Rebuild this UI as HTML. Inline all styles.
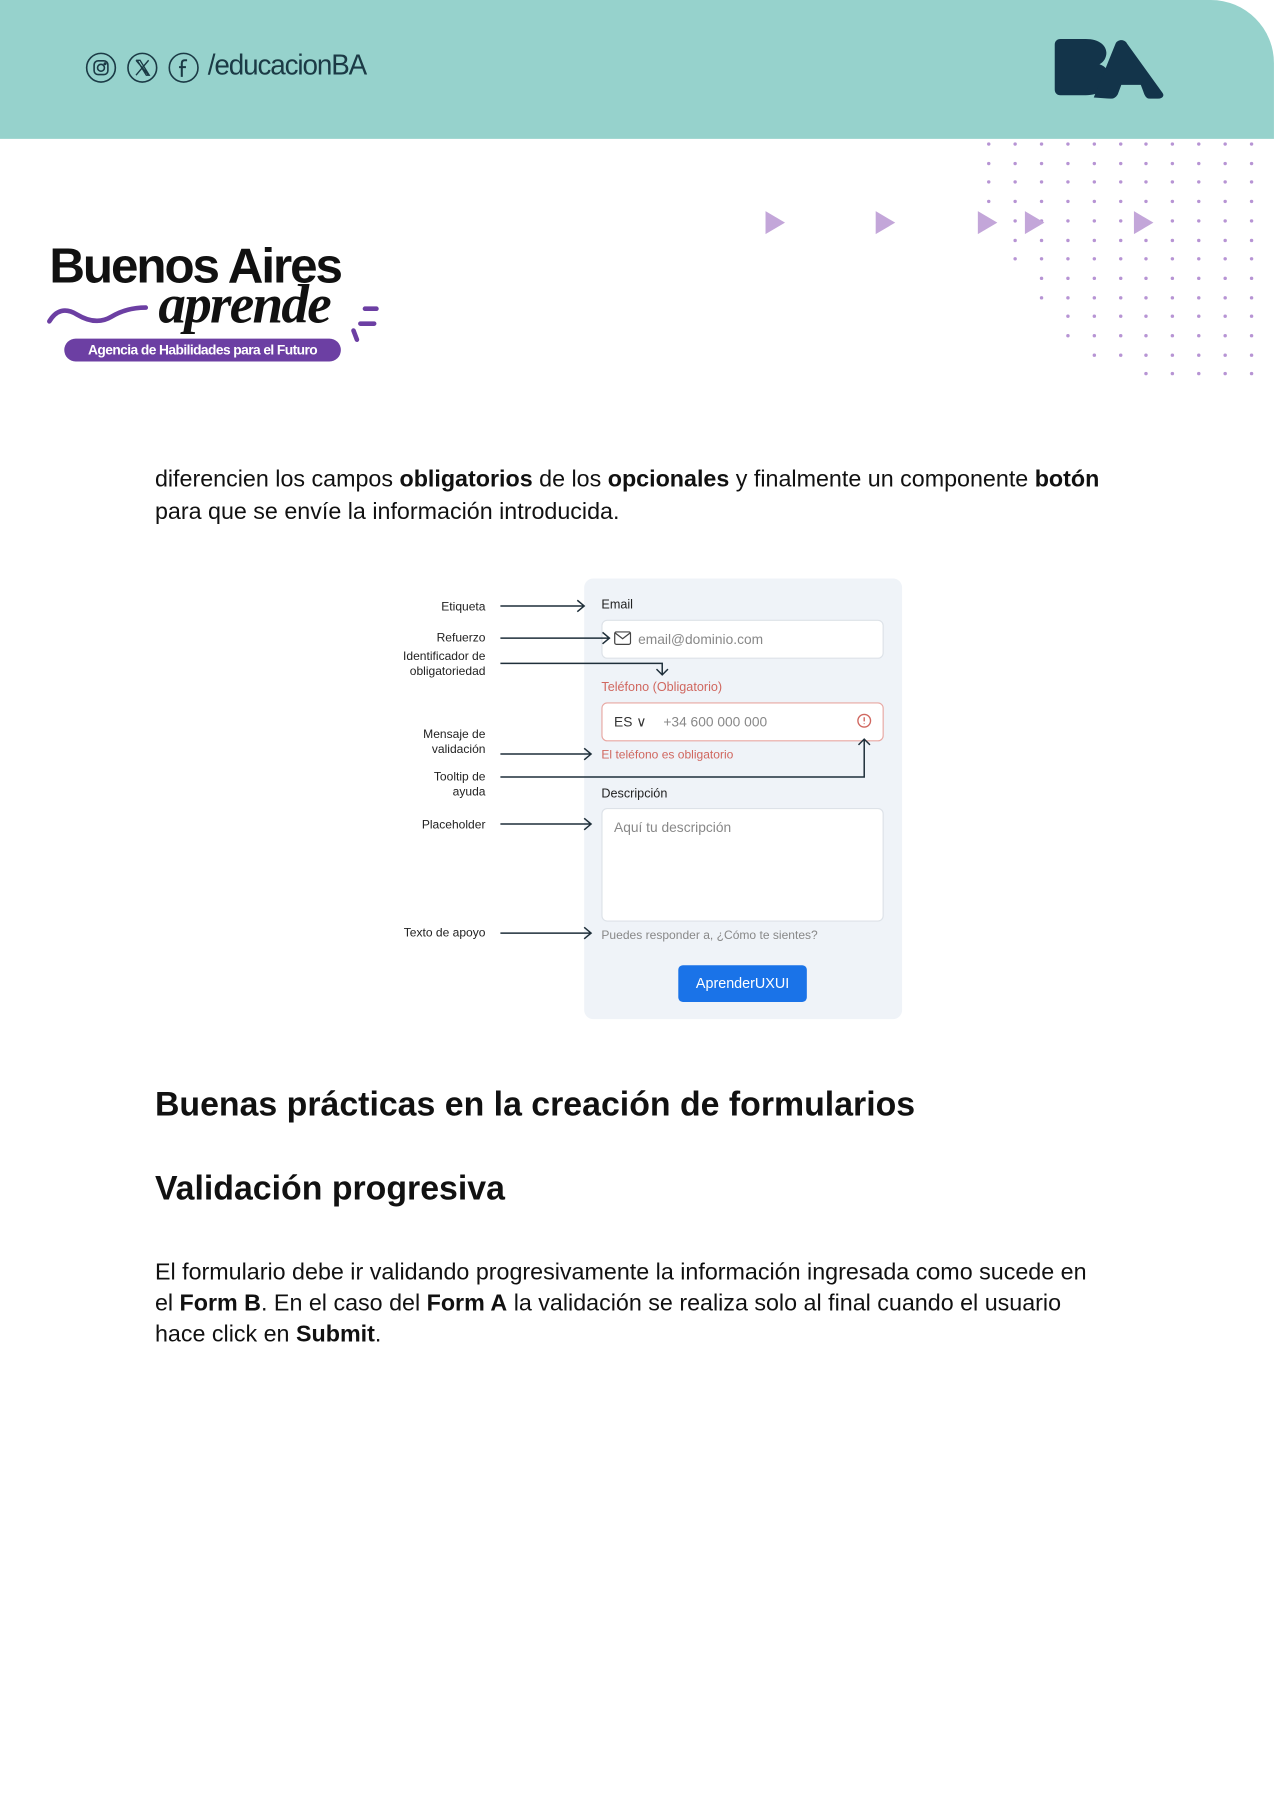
<!DOCTYPE html>
<html><head><meta charset="utf-8"><style>
html,body{margin:0;padding:0;background:#fff;}
body{width:1274px;height:1800px;overflow:hidden;position:relative;}
#s{position:absolute;left:0;top:0;width:1110px;height:1568px;transform:scale(1.1477);transform-origin:0 0;font-family:"Liberation Sans",sans-serif;color:#111;}
.a{position:absolute;white-space:nowrap;}
.hdr{position:absolute;left:0;top:0;width:1110px;height:121px;background:#96d2cc;border-top-right-radius:55px;}
.dot{position:absolute;width:3px;height:3px;border-radius:50%;background:#b794d4;}
.tri{position:absolute;width:0;height:0;border-top:10px solid transparent;border-bottom:10px solid transparent;border-left:17px solid #c3a6d9;}
.p{font-size:20.3px;line-height:27.5px;}
.lab{position:absolute;font-size:10.5px;color:#222;text-align:right;width:120px;left:303px;line-height:13px;}
.fl{position:absolute;font-size:11px;}
.inp{position:absolute;left:524px;width:244px;background:#fff;border:1px solid #dde2e8;border-radius:5px;}
</style></head><body><div id="s">
<div class="hdr"></div>
<svg class="a" style="left:74px;top:45px" width="102" height="28" viewBox="0 0 102 28" fill="none" stroke="#1b3a45" stroke-width="1.4">
<circle cx="14" cy="14" r="12.5"/><rect x="8" y="8" width="12" height="12" rx="3.5"/><circle cx="14" cy="14" r="3"/><circle cx="17.5" cy="10.5" r=".6" fill="#1b3a45"/>
<circle cx="50" cy="14" r="12.5"/><path d="M44.5 7.5l11 13M55.5 7.5l-11 13M45.5 7.5h2.5l8 13h-2.5z" stroke-width="1.2"/>
<circle cx="86" cy="14" r="12.5"/><path d="M89 7.5h-2c-1.8 0-2.6 1-2.6 2.8V22M82 13.5h6" stroke-width="1.8"/>
</svg>
<div class="a" style="left:181px;top:43px;font-size:25px;color:#1b3a45;letter-spacing:-1px;transform:scaleX(.97);transform-origin:0 0">/educacionBA</div>
<svg class="a" style="left:917px;top:33px" width="98" height="53" viewBox="0 0 98 53"><path d="M2 6c0-3 2-5 5-5h22c12 0 18 6 18 12 0 4-2 8-6 10 6 2 8 6 8 11 0 10-8 16-20 16H7c-3 0-5-2-5-5z" fill="#13344a"/><path d="M36 52L55 5c2-4 8-4 10 0l31 43c2 3-1 5-4 5h-7c-3 0-4-2-5-4l-3-8H60l-3 8c-1 2-3 4-6 4z" fill="#13344a"/></svg>
<div id="dots"></div>
<div class="tri" style="left:667px;top:184px"></div>
<div class="tri" style="left:763px;top:184px"></div>
<div class="tri" style="left:852px;top:184px"></div>
<div class="tri" style="left:893px;top:184px"></div>
<div class="tri" style="left:988px;top:184px"></div>
<div class="a" style="left:43px;top:208px;font-size:43px;font-weight:bold;letter-spacing:-1.8px;color:#111">Buenos Aires</div>
<div class="a" style="left:138px;top:238px;font-size:48px;font-style:italic;font-weight:bold;font-family:'Liberation Serif',serif;letter-spacing:-1.5px;color:#111">aprende</div>
<svg class="a" style="left:40px;top:258px" width="295" height="45" viewBox="0 0 295 45" fill="none" stroke="#6c3fa3" stroke-width="4" stroke-linecap="round"><path d="M3 22c6-10 14-12 24-6s20 8 30 2 20-8 30-8"/><path d="M278 11h10M274 24h12M268 30l3 8"/></svg>
<div class="a" style="left:56px;top:295px;width:241px;height:20px;border-radius:10px;background:#6c3fa3;color:#fff;font-size:12px;font-weight:bold;text-align:center;line-height:20px;letter-spacing:-.5px">Agencia de Habilidades para el Futuro</div>

<div class="a p" style="left:135px;top:405px">diferencien los campos <b>obligatorios</b> de los <b>opcionales</b> y finalmente un componente <b>botón</b></div>
<div class="a p" style="left:135px;top:433px">para que se envíe la información introducida.</div>

<div class="a" style="left:509px;top:504px;width:277px;height:384px;background:#eff3f8;border-radius:8px"></div>
<div class="lab" style="top:523px">Etiqueta</div>
<div class="lab" style="top:550px">Refuerzo</div>
<div class="lab" style="top:566px">Identificador de<br>obligatoriedad</div>
<div class="lab" style="top:634px">Mensaje de<br>validación</div>
<div class="lab" style="top:671px">Tooltip de<br>ayuda</div>
<div class="lab" style="top:713px">Placeholder</div>
<div class="lab" style="top:807px">Texto de apoyo</div>
<div class="fl" style="left:524px;top:521px;color:#222">Email</div>
<div class="inp" style="top:540px;height:32px"></div>
<svg class="a" style="left:535px;top:550px" width="15" height="12" viewBox="0 0 15 12" fill="none" stroke="#444" stroke-width="1.1"><rect x=".6" y=".6" width="13.8" height="10.8" rx="1.5"/><path d="M1 1.5l6.5 5 6.5-5"/></svg>
<div class="fl" style="left:556px;top:550px;color:#888;font-size:12px">email@dominio.com</div>
<div class="fl" style="left:524px;top:593px;color:#d0675f">Teléfono (Obligatorio)</div>
<div class="inp" style="top:612px;height:32px;border-color:#e8a7a2"></div>
<div class="fl" style="left:535px;top:622px;color:#333;font-size:12px">ES &#8744;</div>
<div class="fl" style="left:578px;top:622px;color:#888;font-size:12px">+34 600 000 000</div>
<svg class="a" style="left:746px;top:621px" width="14" height="14" viewBox="0 0 14 14" fill="none" stroke="#d0675f" stroke-width="1.2"><circle cx="7" cy="7" r="5.5"/><path d="M7 4v3.5M7 9.3v.6"/></svg>
<div class="fl" style="left:524px;top:652px;color:#d0675f;font-size:10.5px">El teléfono es obligatorio</div>
<div class="fl" style="left:524px;top:686px;color:#222">Descripción</div>
<div class="inp" style="top:704px;height:97px"></div>
<div class="fl" style="left:535px;top:714px;color:#888;font-size:12px">Aquí tu descripción</div>
<div class="fl" style="left:524px;top:809px;color:#888;font-size:10.5px">Puedes responder a, ¿Cómo te sientes?</div>
<div class="a" style="left:591px;top:841px;width:112px;height:32px;background:#1a73e8;border-radius:4px;color:#fff;font-size:12.5px;text-align:center;line-height:32px">AprenderUXUI</div>
<svg class="a" style="left:0;top:0" width="1110" height="1000" fill="none" stroke="#1f2f3a" stroke-width="1.3">
<path d="M436 528h73M503 523l6 5-6 5"/>
<path d="M436 556h95M525 551l6 5-6 5"/>
<path d="M436 578h141v10M572 583l5 5 5-5"/>
<path d="M436 657h79M509 652l6 5-6 5"/>
<path d="M436 677h317v-33M748 649l5-5 5 5"/>
<path d="M436 718h79M509 713l6 5-6 5"/>
<path d="M436 813h79M509 808l6 5-6 5"/>
</svg>

<div class="a" style="left:135px;top:946px;font-size:29.5px;font-weight:bold">Buenas prácticas en la creación de formularios</div>
<div class="a" style="left:135px;top:1019px;font-size:29.5px;font-weight:bold">Validación progresiva</div>
<div class="a p" style="left:135px;top:1096px">El formulario debe ir validando progresivamente la información ingresada como sucede en</div>
<div class="a p" style="left:135px;top:1123px">el <b>Form B</b>. En el caso del <b>Form A</b> la validación se realiza solo al final cuando el usuario</div>
<div class="a p" style="left:135px;top:1150px">hace click en <b>Submit</b>.</div>
</div>
<script>
var d=document.getElementById('dots'),h='';
var starts=[0,0,0,0,1,1,1,2,2,3,3,4,6];
for(var r=0;r<13;r++){for(var c=starts[r];c<11;c++){var x=860+c*22.9,y=124+r*16.7;h+='<div class="dot" style="left:'+x+'px;top:'+y+'px"></div>';}}
d.innerHTML=h;
</script>
</body></html>
